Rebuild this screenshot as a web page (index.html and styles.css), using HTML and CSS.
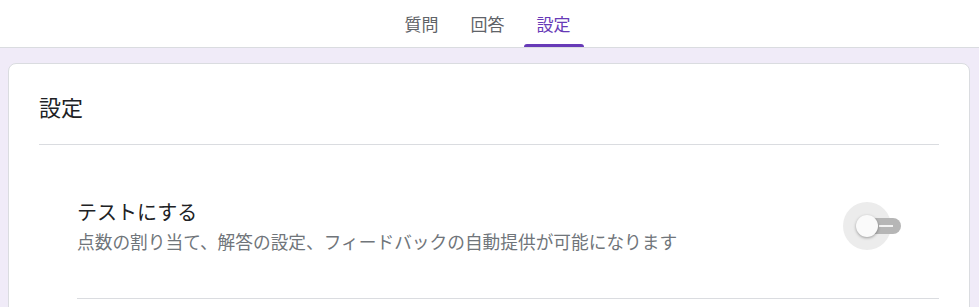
FILE: index.html
```html
<!DOCTYPE html>
<html lang="ja">
<head>
<meta charset="utf-8">
<link rel="stylesheet" href="styles.css">
</head>
<body>
<header class="topbar">
  <nav class="tabs">
    <div class="tab">質問</div>
    <div class="tab">回答</div>
    <div class="tab active">設定</div>
  </nav>
</header>
<main class="main">
  <section class="card">
    <h1 class="card-title">設定</h1>
    <div class="item">
      <div class="item-text">
        <div class="item-title">テストにする</div>
        <div class="item-desc">点数の割り当て、解答の設定、フィードバックの自動提供が可能になります</div>
      </div>
      <div class="switch" role="switch" aria-checked="false">
        <span class="halo"></span>
        <span class="track"></span>
        <span class="dash"></span>
        <span class="thumb"></span>
      </div>
    </div>
  </section>
</main>
</body>
</html>
```
FILE: styles.css
```css
* { box-sizing: border-box; }
html, body { margin: 0; padding: 0; }
body {
  width: 979px;
  height: 307px;
  overflow: hidden;
  background: #f0ebf8;
  font-family: "Noto Sans CJK JP", "Noto Sans", sans-serif;
  color: #202124;
}
.topbar {
  height: 48px;
  background: #ffffff;
  border-bottom: 1px solid #dadce0;
  display: flex;
  justify-content: center;
}
.tabs {
  display: flex;
  gap: 6px;
  height: 47px;
  margin-right: 4px;
}
.tab {
  width: 60px;
  height: 47px;
  display: flex;
  align-items: center;
  justify-content: center;
  font-size: 17px;
  color: #5f6368;
  position: relative;
  padding-bottom: 1px;
}
.tab.active { color: #673ab7; }
.tab.active::after {
  content: "";
  position: absolute;
  left: 0;
  right: 0;
  bottom: 0;
  height: 3px;
  background: #673ab7;
  border-radius: 3px 3px 0 0;
}
.main {
  padding: 15px 9px 0 8px;
  height: 259px;
  overflow: hidden;
}
.card {
  background: #ffffff;
  border: 1px solid #dadce0;
  border-radius: 8px;
  padding: 0 30px;
  height: 260px;
}
.card-title {
  margin: 0;
  padding: 26px 0 22px;
  font-size: 22px;
  line-height: 32px;
  font-weight: 400;
  color: #202124;
  border-bottom: 1px solid #dadce0;
}
.item {
  margin-left: 38px;
  padding: 53px 38px 44px 0;
  display: flex;
  align-items: center;
  justify-content: space-between;
  border-bottom: 1px solid #dadce0;
}
.item-title {
  font-size: 20px;
  line-height: 28px;
  color: #202124;
}
.item-desc {
  margin-top: 2px;
  font-size: 17.7px;
  line-height: 26px;
  color: #70757a;
  white-space: nowrap;
}
.switch {
  position: relative;
  width: 58px;
  height: 48px;
  flex: none;
}
.halo {
  position: absolute;
  left: 0;
  top: 0;
  width: 48px;
  height: 48px;
  border-radius: 50%;
  background: #ececec;
}
.track {
  position: absolute;
  left: 22px;
  top: 16px;
  width: 36px;
  height: 16px;
  border-radius: 8px;
  background: #b6b6b6;
}
.dash {
  position: absolute;
  left: 36px;
  top: 23px;
  width: 14px;
  height: 2px;
  background: #f4f4f4;
}
.thumb {
  position: absolute;
  left: 13px;
  top: 13px;
  width: 22px;
  height: 22px;
  border-radius: 50%;
  background: #fafafa;
  box-shadow: 0 1px 3px rgba(0,0,0,0.35);
}
```
